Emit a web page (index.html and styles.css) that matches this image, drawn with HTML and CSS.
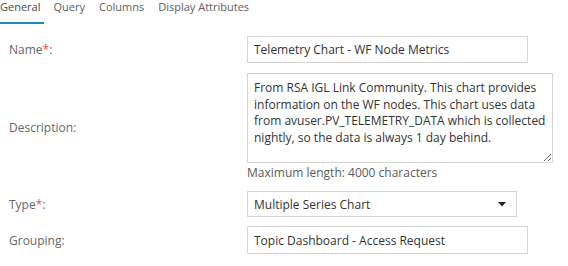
FILE: index.html
```html
<!DOCTYPE html>
<html>
<head>
<meta charset="utf-8">
<link rel="stylesheet" href="styles.css">
</head>
<body>
<div class="tabs">
  <div class="tab active">General</div>
  <div class="tab">Query</div>
  <div class="tab">Columns</div>
  <div class="tab">Display Attributes</div>
</div>
<div class="form">
  <div class="label">Name<span class="req">*</span>:</div>
  <div class="field"><input class="input w281" type="text" value="Telemetry Chart - WF Node Metrics"></div>

  <div class="label">Description:</div>
  <div class="field">
    <textarea class="textarea">From RSA IGL Link Community. This chart provides
information on the WF nodes. This chart uses data
from avuser.PV_TELEMETRY_DATA which is collected
nightly, so the data is always 1 day behind.</textarea>
    <div class="help">Maximum length: 4000 characters</div>
  </div>

  <div class="label">Type<span class="req">*</span>:</div>
  <div class="field">
    <div class="select"><span>Multiple Series Chart</span><svg class="caret" width="8" height="5" viewBox="0 0 8 5"><path d="M0 0H8L4 4.5Z" fill="#222"/></svg></div>
  </div>

  <div class="label last">Grouping:</div>
  <div class="field last"><input class="input w281 tall" type="text" value="Topic Dashboard - Access Request"></div>
</div>
</body>
</html>
```
FILE: styles.css
```css
html, body {
  margin: 0;
  padding: 0;
  background: #fff;
}
body {
  font-family: "Open Sans", "Liberation Sans", sans-serif;
  font-size: 12px;
  color: #333;
  width: 568px;
  height: 266px;
  overflow: hidden;
}
.tabs {
  display: flex;
  height: 24px;
}
.tab {
  color: #5e5e5e;
  font-size: 11px;
  line-height: 14px;
  height: 22px;
  box-sizing: border-box;
  padding: 0 5px 8px 0;
  margin-right: 9px;
}
.tab.active {
  color: #4a4a4a;
  border-bottom: 2px solid #1b8db5;
  height: 24px;
  padding-right: 4px;
}
.form {
  display: grid;
  grid-template-columns: 238px 1fr;
  align-items: center;
  padding: 12px 0 0 9px;
}
.label {
  color: #666;
}
.req {
  color: #ef4b4b;
}
.field {
  display: flex;
  flex-direction: column;
  align-items: flex-start;
}
.input {
  box-sizing: border-box;
  height: 27px;
  border: 1px solid #d5d5d5;
  border-radius: 0;
  padding: 0 6px;
  font-family: inherit;
  font-size: 12px;
  color: #333;
  outline: none;
  margin: 0;
}
.w281 { width: 281px; }
.tall { height: 28px; }
.textarea {
  box-sizing: border-box;
  width: 306px;
  height: 90px;
  margin: 10px 0 0 0;
  border: 1px solid #d5d5d5;
  padding: 6px 6px;
  font-family: inherit;
  font-size: 12px;
  line-height: 16.7px;
  color: #333;
  resize: both;
  overflow: hidden;
  white-space: pre;
}
.help {
  color: #5a5a5a;
  line-height: 16px;
  margin-top: 2px;
  margin-bottom: 10px;
}
.select {
  box-sizing: border-box;
  width: 270px;
  height: 26px;
  border: 1px solid #d5d5d5;
  padding: 0 10px 0 6px;
  display: flex;
  align-items: center;
  justify-content: space-between;
  color: #333;
}
.caret {
  display: block;
  margin-top: 1px;
}
.last {
  margin-top: 9px;
}
```
